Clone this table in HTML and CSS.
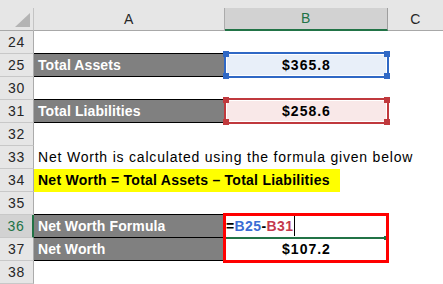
FILE: index.html
```html
<!DOCTYPE html>
<html>
<head>
<meta charset="utf-8">
<link rel="stylesheet" href="styles.css">
</head>
<body>
<div class="sheet">
  <div class="hc"><div class="lbl corner"><svg class="tri" width="33" height="21" viewBox="0 0 33 21"><polygon points="30,5 30,19 15,19" fill="#b4b4b4"/></svg></div></div>
  <div class="hc"><div class="lbl">A</div></div>
  <div class="hc"><div class="lbl active">B</div></div>
  <div class="hc"><div class="lbl last">C</div></div>

  <div class="rh">24</div><div class="c"></div><div class="c"></div><div class="c"></div>

  <div class="rh">25</div>
  <div class="c dark">Total Assets</div>
  <div class="c val fill-blue">$365.8
    <div class="sel sel-blue"><i class="h tl"></i><i class="h tr"></i><i class="h bl"></i><i class="h br"></i></div>
  </div>
  <div class="c"></div>

  <div class="rh">30</div><div class="c"></div><div class="c"></div><div class="c"></div>

  <div class="rh">31</div>
  <div class="c dark">Total Liabilities</div>
  <div class="c val fill-red">$258.6
    <div class="sel sel-red"><i class="h tl"></i><i class="h tr"></i><i class="h bl"></i><i class="h br"></i></div>
  </div>
  <div class="c"></div>

  <div class="rh">32</div><div class="c"></div><div class="c"></div><div class="c"></div>

  <div class="rh">33</div>
  <div class="c wide note">Net Worth is calculated using the formula given below</div>

  <div class="rh">34</div>
  <div class="c wide"><span class="hl">Net Worth = Total Assets – Total Liabilities</span></div>

  <div class="rh">35</div><div class="c"></div><div class="c"></div><div class="c"></div>

  <div class="rh act">36</div>
  <div class="c dark">Net Worth Formula</div>
  <div class="fbox">
    <div class="c formula">=<span class="ref1">B25</span>-<span class="ref2">B31</span><span class="cursor"></span><i class="fh"></i></div>
    <div class="c val">$107.2</div>
    <div class="frame"></div>
  </div>
  <div class="c"></div>

  <div class="rh">37</div>
  <div class="c dark">Net Worth</div>
  <div class="c"></div>

  <div class="rh">38</div><div class="c"></div><div class="c"></div><div class="c"></div>
</div>
</body>
</html>
```
FILE: styles.css
```css
html, body {
  margin: 0;
  padding: 0;
  background: #fff;
  overflow: hidden;
}

.sheet {
  display: grid;
  grid-template-columns: 34px 191px 163px 55px;
  grid-template-rows: 31px repeat(11, 23px);
  width: 443px;
  height: 284px;
  font-family: "Liberation Sans", Arial, sans-serif;
  font-size: 14px;
  color: #000;
}

.hc {
  background: #e6e6e6;
  padding-top: 8px;
  box-sizing: border-box;
  display: flex;
}

.lbl {
  flex: 1;
  box-sizing: border-box;
  border-bottom: 1px solid #a8a8a8;
  border-right: 1px solid #ababab;
  display: flex;
  align-items: center;
  justify-content: center;
  color: #262626;
  letter-spacing: 0.5px;
  padding-bottom: 1px;
}

.lbl.corner {
  border-right-color: #c4c4c4;
  align-items: stretch;
  padding: 0;
}

.tri {
  display: block;
}

.lbl.active {
  background: #d2d2d2;
  border-bottom: 2px solid #217346;
  color: #217346;
  border-right-color: #9e9e9e;
}

.lbl.last {
  border-right: none;
}

.rh {
  background: #e6e6e6;
  box-sizing: border-box;
  border-right: 1px solid #ababab;
  border-bottom: 1px solid #c8c8c8;
  text-align: center;
  line-height: 22px;
  color: #262626;
  letter-spacing: 0.8px;
}

.rh.act {
  background: #d2d2d2;
  color: #217346;
  border-right: 2px solid #217346;
}

.c {
  box-sizing: border-box;
  line-height: 22px;
  white-space: nowrap;
  min-width: 0;
}

.dark {
  background: #808080;
  color: #fff;
  font-weight: bold;
  padding-left: 4px;
  border-bottom: 1px solid #000;
  box-shadow: 0 -1px 0 #000;
  letter-spacing: 0.1px;
}

.val {
  position: relative;
  text-align: center;
  font-weight: bold;
  letter-spacing: 1px;
}

.fill-blue {
  background: #e8eff9;
}

.fill-red {
  background: #f9e8e8;
}

.sel {
  position: absolute;
  top: -2px;
  left: -1px;
  right: -1px;
  bottom: -1px;
  border: 2px solid;
  box-shadow: inset 0 0 0 1px #fff;
}

.sel-blue {
  border-color: #2f68c5;
  color: #2f68c5;
}

.sel-red {
  border-color: #c0393d;
  color: #c0393d;
}

.h {
  position: absolute;
  width: 6px;
  height: 6px;
  background: currentColor;
}

.h.tl { left: -3px; top: -3px; }
.h.tr { right: -3px; top: -3px; }
.h.bl { left: -3px; bottom: -3px; }
.h.br { right: -3px; bottom: -3px; }

.wide {
  grid-column: span 3;
}

.note {
  padding-left: 4px;
  letter-spacing: 0.8px;
}

.hl {
  display: block;
  width: 306px;
  height: 23px;
  box-sizing: border-box;
  background: #ffff00;
  padding-left: 4px;
  font-weight: bold;
  letter-spacing: 0.25px;
}

.fbox {
  grid-row: span 2;
  position: relative;
  display: grid;
  grid-template-rows: 23px 23px;
}

.formula {
  position: relative;
  padding-left: 1px;
  font-weight: bold;
  letter-spacing: 0.4px;
  border-bottom: 1px solid #217346;
  box-shadow: 0 1px 0 #217346;
}

.ref1 {
  color: #3a6ed4;
}

.ref2 {
  color: #c43a4e;
}

.cursor {
  display: inline-block;
  width: 1px;
  height: 20px;
  background: #000;
  vertical-align: -5px;
  margin-left: 1px;
}

.fh {
  position: absolute;
  right: 1px;
  bottom: -3px;
  width: 3px;
  height: 4px;
  background: #217346;
}

.frame {
  position: absolute;
  top: -2px;
  left: -2px;
  right: -1px;
  bottom: -2px;
  border: 3px solid #ff0000;
}
```
